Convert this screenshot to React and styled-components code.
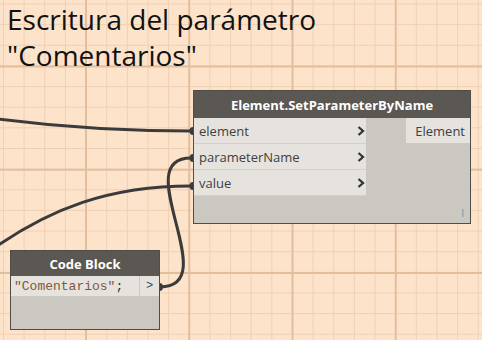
import React from 'react';
import styled, { createGlobalStyle } from 'styled-components';

const GlobalStyle = createGlobalStyle`
  html, body {
    margin: 0;
    padding: 0;
    background: #fce3ca;
  }
  body {
    font-family: "Open Sans", "Noto Sans", sans-serif;
  }
`;

const Canvas = styled.div`
  position: relative;
  width: 482px;
  height: 340px;
  overflow: hidden;
  background-color: #fce3ca;
  background-image:
    linear-gradient(to right, #e3be9d 1.5px, transparent 1.5px),
    linear-gradient(to bottom, #e3be9d 1.5px, transparent 1.5px),
    linear-gradient(to right, #f0d0b3 1px, transparent 1px),
    linear-gradient(to bottom, #f0d0b3 1px, transparent 1px);
  background-size: 103.25px 103.25px, 103.25px 103.25px, 20.65px 20.65px, 20.65px 20.65px;
  background-position: 85px 0, 0 65.5px, 3px 0, 0 3.5px;
`;

const Title = styled.h1`
  position: relative;
  z-index: 2;
  margin: 0 0 0 7px;
  font-size: 28px;
  font-weight: 400;
  color: #121212;
`;

const TitleLine = styled.span`
  display: block;
  line-height: ${(p) => p.$lh}px;
`;

const Wires = styled.svg`
  position: absolute;
  left: 0;
  top: 0;
  z-index: 0;
  pointer-events: none;
`;

const Node = styled.div`
  position: absolute;
  z-index: 1;
  left: ${(p) => p.$x}px;
  top: ${(p) => p.$y}px;
  width: ${(p) => p.$w}px;
  height: ${(p) => p.$h}px;
  box-sizing: border-box;
  border: 1px solid #4f4c49;
  background: #cbc8c1;
  display: flex;
  flex-direction: column;
`;

const NodeHeader = styled.div`
  flex-shrink: 0;
  height: ${(p) => p.$h}px;
  background: #5b5753;
  color: #ffffff;
  font-size: 13px;
  font-weight: 700;
  display: flex;
  align-items: center;
  justify-content: center;
`;

const PortsRow = styled.div`
  display: flex;
  align-items: flex-start;
  justify-content: space-between;
`;

const Inputs = styled.div`
  width: ${(p) => p.$w}px;
  display: flex;
  flex-direction: column;
`;

const InputPort = styled.div`
  height: 25px;
  border-bottom: 1px solid #d3d0ca;
  background: #e6e3de;
  display: flex;
  align-items: center;
  justify-content: space-between;
  padding: 0 1px 0 5px;
  font-size: 13px;
  color: #3d3f42;
`;

const OutputPort = styled.div`
  width: ${(p) => p.$w}px;
  height: ${(p) => p.$h}px;
  box-sizing: border-box;
  background: #e6e3de;
  display: flex;
  align-items: center;
  justify-content: ${(p) => p.$align || 'flex-end'};
  padding-right: ${(p) => p.$pad ?? 5}px;
  font-size: 13px;
  color: #3d3f42;
`;

const Footer = styled.div`
  flex: 1;
  display: flex;
  align-items: flex-end;
  justify-content: flex-end;
  padding: 0 6px 6px 0;
`;

const LacingMark = styled.span`
  width: 2px;
  height: 8px;
  background: linear-gradient(to right, #8fa4c0, #c9b98a);
`;

const CodeRow = styled.div`
  display: flex;
  gap: 1px;
  height: 20px;
`;

const CodeInput = styled.div`
  width: 128px;
  background: #e6e3de;
  padding-left: 3px;
  box-sizing: border-box;
  display: flex;
  align-items: center;
  font-family: "Liberation Mono", "DejaVu Sans Mono", monospace;
  font-size: 13px;
  color: #333333;
`;

const StringText = styled.span`
  color: #80573f;
`;

const CodeOut = styled.span`
  font-family: "Liberation Mono", monospace;
  font-size: 12px;
  color: #3e4a58;
`;

const Chevron = () => (
  <svg width="8" height="10" viewBox="0 0 8 10">
    <polyline points="1.5,1 6,5 1.5,9" fill="none" stroke="#343434" strokeWidth="2.3" />
  </svg>
);

const wire = '#3b3b3b';

const App = () => {
  const inputs = ['element', 'parameterName', 'value'];
  return (
    <>
      <GlobalStyle />
      <Canvas>
        <Title>
          <TitleLine $lh={38}>Escritura del parámetro</TitleLine>
          <TitleLine $lh={34}>"Comentarios"</TitleLine>
        </Title>

        <Wires width="482" height="340" viewBox="0 0 482 340">
          <g fill="none" stroke={wire} strokeWidth="3" strokeLinecap="round">
            <path d="M -10 118 C 50 126, 110 131, 191 131" />
            <path d="M -10 251 C 50 208, 110 186, 191 186" />
            <path d="M 160 287 C 225 287, 127 158, 191 158" />
          </g>
          <g fill={wire}>
            <ellipse cx="193" cy="131" rx="3.5" ry="4" />
            <ellipse cx="193" cy="158" rx="3.5" ry="4" />
            <ellipse cx="193" cy="186" rx="3.5" ry="4" />
            <ellipse cx="159.5" cy="287" rx="3.5" ry="4" />
          </g>
        </Wires>

        <Node $x={193} $y={90} $w={278} $h={134}>
          <NodeHeader $h={27}>Element.SetParameterByName</NodeHeader>
          <PortsRow>
            <Inputs $w={172}>
              {inputs.map((name) => (
                <InputPort key={name}>
                  <span>{name}</span>
                  <Chevron />
                </InputPort>
              ))}
            </Inputs>
            <OutputPort $w={64} $h={25}>Element</OutputPort>
          </PortsRow>
          <Footer>
            <LacingMark />
          </Footer>
        </Node>

        <Node $x={10} $y={250} $w={150} $h={80}>
          <NodeHeader $h={25}>Code Block</NodeHeader>
          <CodeRow>
            <CodeInput>
              <StringText>"Comentarios"</StringText>;
            </CodeInput>
            <OutputPort $w={19} $h={20} $align="center" $pad={0}>
              <CodeOut>&gt;</CodeOut>
            </OutputPort>
          </CodeRow>
        </Node>
      </Canvas>
    </>
  );
};

export default App;
